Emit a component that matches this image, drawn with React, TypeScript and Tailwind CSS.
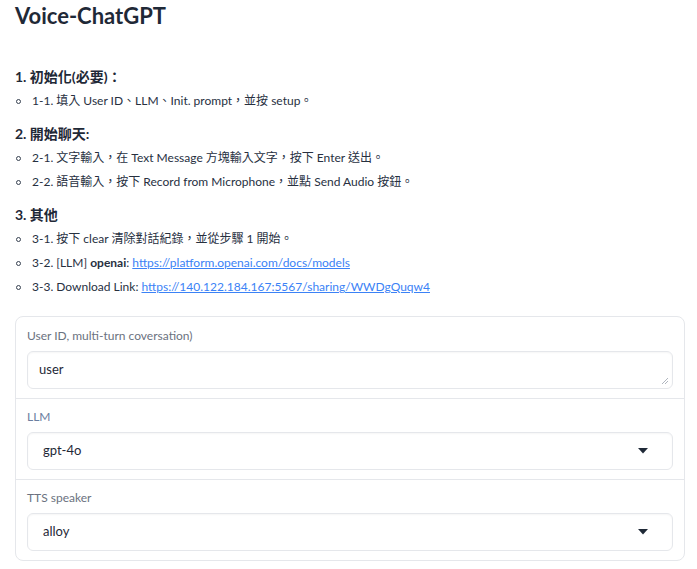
const font = { fontFamily: "Lato, 'Noto Sans CJK TC', sans-serif" };

function Bullet({ children }: { children: React.ReactNode }) {
  return (
    <li className="flex h-6 items-center">
      <span className="ml-[1px] mr-[11px] inline-block h-[5px] w-[5px] rounded-full border border-[#374151]" />
      <span>{children}</span>
    </li>
  );
}

function Caret() {
  return (
    <svg width="10" height="6" viewBox="0 0 10 6" className="shrink-0">
      <path d="M0 0h10L5 5.5z" fill="#1f2937" />
    </svg>
  );
}

export default function App() {
  return (
    <div className="min-h-[569px] bg-white px-[15px] text-[#1f2937]" style={font}>
      <h1 className="pt-[1px] text-[22px] font-bold leading-[30px]">Voice-ChatGPT</h1>

      <div className="mt-[33px] text-[12px] leading-6 text-[#27303f]">
        <h3 className="text-[14px] font-bold leading-[25px] text-[#1f2937]">1. 初始化(必要)：</h3>
        <ul>
          <Bullet>1-1. 填入 User ID、LLM、Init. prompt，並按 setup。</Bullet>
        </ul>

        <h3 className="mt-[8px] text-[14px] font-bold leading-[25px] text-[#1f2937]">2. 開始聊天:</h3>
        <ul>
          <Bullet>2-1. 文字輸入，在 Text Message 方塊輸入文字，按下 Enter 送出。</Bullet>
          <Bullet>2-2. 語音輸入，按下 Record from Microphone，並點 Send Audio 按鈕。</Bullet>
        </ul>

        <h3 className="mt-[8px] text-[14px] font-bold leading-[25px] text-[#1f2937]">3. 其他</h3>
        <ul>
          <Bullet>3-1. 按下 clear 清除對話紀錄，並從步驟 1 開始。</Bullet>
          <Bullet>
            3-2. [LLM] <b className="font-bold">openai</b>:{" "}
            <a className="text-[#3b82f6] underline">https://platform.openai.com/docs/models</a>
          </Bullet>
          <Bullet>
            3-3. Download Link:{" "}
            <a className="text-[#3b82f6] underline">https://140.122.184.167:5567/sharing/WWDgQuqw4</a>
          </Bullet>
        </ul>
      </div>

      <div className="mt-[17px] w-[670px] overflow-hidden rounded-lg border border-[#e5e7eb] text-[12px]">
        <div className="px-[11px] pb-[9px] pt-[11px]">
          <div className="mb-[7px] leading-4 text-[#6b7280]">User ID, multi-turn coversation)</div>
          <div className="relative flex h-[38px] items-center rounded-md border border-[#e5e7eb] px-[11px] text-[13px] text-[#1f2937] shadow-[inset_0_1px_2px_rgba(0,0,0,0.04)]">
            user
            <svg width="8" height="8" viewBox="0 0 8 8" className="absolute bottom-[3px] right-[3px]">
              <path d="M7 1L1 7M7 4L4 7" stroke="#9ca3af" strokeWidth="0.8" />
            </svg>
          </div>
        </div>
        <div className="border-t border-[#e5e7eb] px-[11px] pb-[9px] pt-[10px]">
          <div className="mb-[7px] leading-4 text-[#6b7ea0]">LLM</div>
          <div className="flex h-[38px] items-center justify-between rounded-md border border-[#e5e7eb] pl-[15px] pr-[24px] text-[13px] text-[#1f2937] shadow-[inset_0_1px_2px_rgba(0,0,0,0.04)]">
            gpt-4o
            <Caret />
          </div>
        </div>
        <div className="border-t border-[#e5e7eb] px-[11px] pb-[9px] pt-[10px]">
          <div className="mb-[7px] leading-4 text-[#6b7280]">TTS speaker</div>
          <div className="flex h-[38px] items-center justify-between rounded-md border border-[#e5e7eb] pl-[15px] pr-[24px] text-[13px] text-[#1f2937] shadow-[inset_0_1px_2px_rgba(0,0,0,0.04)]">
            alloy
            <Caret />
          </div>
        </div>
      </div>
    </div>
  );
}
